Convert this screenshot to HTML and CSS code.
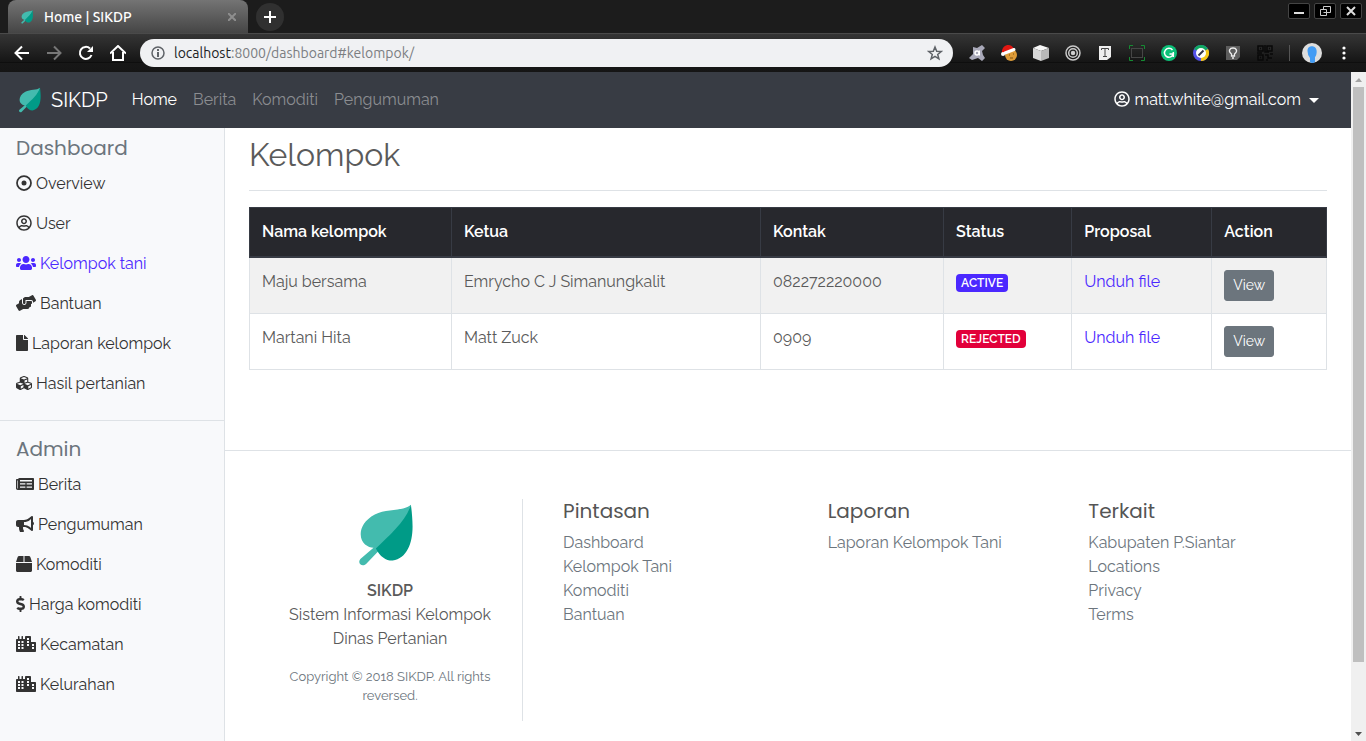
FILE: index.html
```html
<!DOCTYPE html>
<html lang="id">
<head>
<meta charset="utf-8">
<meta name="viewport" content="width=device-width, initial-scale=1">
<title>Home | SIKDP</title>
<link rel="stylesheet" href="styles.css">
</head>
<body>
<svg class="sprite" aria-hidden="true">
  <symbol id="leaf" viewBox="355 190 190 190"><path fill="#43bbae" d="M512 195C490 215 440 206 405 224 375 240 363 262 363 283 363 310 385 323 401 323L362 356C352 368 367 382 379 371L411 338Q510 245 512 195Z"/><path fill="#009b87" d="M512 195C500 240 450 285 408 325 420 350 440 362 458 361 500 355 517 310 517 260 517 235 514 210 512 195Z"/></symbol>
  <symbol id="i-dot" viewBox="0 0 512 512"><circle cx="256" cy="256" r="224" fill="none" stroke="currentColor" stroke-width="56"/><circle cx="256" cy="256" r="80"/></symbol>
  <symbol id="i-user" viewBox="0 0 496 512"><path d="M248 104c-53 0-96 43-96 96s43 96 96 96 96-43 96-96-43-96-96-96zm0 144c-26.500 0-48-21.500-48-48s21.500-48 48-48 48 21.500 48 48-21.500 48-48 48zm0-240C111 8 0 119 0 256s111 248 248 248 248-111 248-248S385 8 248 8zm0 448c-49.700 0-95.100-18.300-130.100-48.400 14.900-23 40.400-38.600 69.600-39.500 20.800 6.400 40.600 9.600 60.500 9.600s39.700-3.100 60.500-9.600c29.200 1 54.700 16.500 69.600 39.500-35 30.100-80.400 48.400-130.100 48.400zm162.700-84.100c-24.400-31.400-62.100-51.900-105.100-51.900-10.200 0-26 9.600-57.600 9.600-31.500 0-47.400-9.600-57.600-9.600-42.900 0-80.600 20.500-105.100 51.900C61.900 339.200 48 299.200 48 256c0-110.300 89.700-200 200-200s200 89.700 200 200c0 43.200-13.900 83.200-37.300 115.900z"/></symbol>
  <symbol id="i-users" viewBox="0 0 640 512"><path d="M96 224c35.300 0 64-28.700 64-64s-28.700-64-64-64-64 28.700-64 64 28.700 64 64 64zm448 0c35.300 0 64-28.700 64-64s-28.700-64-64-64-64 28.700-64 64 28.700 64 64 64zm32 32h-64c-17.600 0-33.500 7.100-45.100 18.600 40.300 22.100 68.900 62 75.100 109.400h66c17.700 0 32-14.300 32-32v-32c0-35.300-28.700-64-64-64zm-256 0c61.900 0 112-50.100 112-112S381.900 32 320 32 208 82.100 208 144s50.100 112 112 112zm76.800 32h-8.300c-20.800 10-43.900 16-68.500 16s-47.600-6-68.500-16h-8.300C179.600 288 128 339.600 128 403.200V432c0 26.500 21.500 48 48 48h288c26.500 0 48-21.500 48-48v-28.800c0-63.600-51.600-115.200-115.200-115.200zm-223.700-13.400C161.500 263.100 145.600 256 128 256H64c-35.300 0-64 28.700-64 64v32c0 17.700 14.300 32 32 32h65.900c6.300-47.400 34.900-87.300 75.200-109.400z"/></symbol>
  <symbol id="i-hands" viewBox="0 0 640 512"><path d="M488 192H336v56c0 39.700-32.300 72-72 72s-72-32.300-72-72V126.400l-64.900 39C107.800 176.900 96 197.800 96 220.200v47.300l-80 46.200C.7 322.500-4.600 342.100 4.300 357.400l80 138.600c8.800 15.300 28.400 20.500 43.700 11.700L231.400 448H368c35.300 0 64-28.700 64-64h16c17.700 0 32-14.300 32-32v-64h8c13.300 0 24-10.700 24-24v-48c0-13.300-10.700-24-24-24zm147.700-37.400L555.700 16C546.900.7 527.300-4.500 512 4.300L408.600 64H306.400c-12 0-23.700 3.400-33.900 9.700L239 94.600c-9.400 5.800-15 16.100-15 27.100V248c0 22.100 17.900 40 40 40s40-17.900 40-40v-88h184c30.900 0 56 25.100 56 56v28.500l80-46.200c15.300-8.900 20.500-28.400 11.700-43.700z"/></symbol>
  <symbol id="i-file" viewBox="0 0 384 512"><path d="M224 136V0H24C10.700 0 0 10.700 0 24v464c0 13.300 10.700 24 24 24h336c13.300 0 24-10.700 24-24V160H248c-13.200 0-24-10.800-24-24zm160-14.100v6.100H256V0h6.100c6.400 0 12.500 2.500 17 7l97.900 98c4.500 4.500 7 10.600 7 16.900z"/></symbol>
  <symbol id="i-cubes" viewBox="0 0 512 512"><path d="M488.600 250.200L392 214V105.500c0-15-9.300-28.400-23.400-33.700l-100-37.500c-8.100-3.100-17.100-3.100-25.300 0l-100 37.500c-14.100 5.300-23.400 18.700-23.400 33.700V214l-96.600 36.200C9.300 255.500 0 268.900 0 283.900V394c0 13.600 7.700 26.100 19.900 32.200l100 50c10.100 5.100 22.100 5.100 32.200 0l103.900-52 103.900 52c10.100 5.100 22.100 5.100 32.200 0l100-50c12.200-6.100 19.900-18.600 19.900-32.200V283.900c0-15-9.300-28.400-23.400-33.700zM358 214.800l-85 31.900v-68.200l85-37v73.300zM154 104.100l102-38.200 102 38.200v.6l-102 41.400-102-41.400v-.6zm84 291.100l-85 42.500v-79.100l85-38.800v75.400zm0-112l-102 41.400-102-41.400v-.6l102-38.200 102 38.200v.6zm240 112l-85 42.500v-79.100l85-38.800v75.400zm0-112l-102 41.400-102-41.400v-.6l102-38.200 102 38.200v.6z"/></symbol>
  <symbol id="i-news" viewBox="0 0 576 512"><path fill-rule="evenodd" d="M552 64H112c-21 0-39 13-45 32H24c-13 0-24 11-24 24v272c0 31 25 56 56 56h496c13 0 24-11 24-24V88c0-13-11-24-24-24zM40 392V144h20v248c0 11-20 11-20 0zM128 128H512V176H128zM128 232H300V272H128zM340 232H512V272H340zM128 332H300V372H128zM340 332H512V372H340z"/></symbol>
  <symbol id="i-horn" viewBox="0 0 576 512"><path d="M576 240c0-23.630-12.950-44.040-32-55.120V32.010C544 23.260 537.020 0 512 0c-7.120 0-14.190 2.380-19.980 7.020l-85.030 68.030C364.280 109.190 310.660 128 256 128H64c-35.350 0-64 28.650-64 64v96c0 35.350 28.650 64 64 64h33.700c-1.390 10.480-2.180 21.140-2.180 32 0 39.770 9.260 77.350 25.560 110.940 5.190 10.690 16.520 17.060 28.400 17.060h74.280c26.050 0 41.690-29.840 25.900-50.560-16.400-21.520-26.150-48.360-26.150-77.440 0-11.110 1.620-21.790 4.410-32H256c54.660 0 108.280 18.810 150.980 52.950l85.030 68.030a32.023 32.023 0 0 0 19.980 7.020c24.920 0 32-22.780 32-32V295.130C563.050 284.040 576 263.630 576 240zm-96 141.420l-33.050-26.440C392.950 311.780 325.120 288 256 288v-96c69.120 0 136.950-23.780 190.950-66.980L480 98.580v282.840z"/></symbol>
  <symbol id="i-box" viewBox="0 0 512 512"><path d="M509.500 184.600L458.900 32.800C452.400 13.200 434.100 0 413.400 0H272v192h238.700c-.4-2.500-.4-5-1.200-7.400zM240 0H98.600c-20.700 0-39 13.200-45.500 32.800L2.500 184.600c-.8 2.400-.8 4.900-1.200 7.400H240V0zM0 224v240c0 26.500 21.500 48 48 48h416c26.500 0 48-21.500 48-48V224H0z"/></symbol>
  <symbol id="i-dollar" viewBox="0 0 288 512"><path d="M209.200 233.400l-108-31.600C88.700 198.200 80 186.500 80 173.500c0-16.300 13.200-29.500 29.500-29.500h66.300c12.200 0 24.200 3.700 34.200 10.500 6.100 4.100 14.300 3.100 19.500-2l34.800-34c7.100-6.900 6.100-18.400-1.800-24.500C238 74.800 207.400 64.100 176 64V16c0-8.800-7.200-16-16-16h-32c-8.800 0-16 7.200-16 16v48h-2.500C45.800 64-5.400 118.700.5 183.600c4.200 46.100 39.400 83.600 83.800 96.600l102.500 30c12.500 3.700 21.200 15.300 21.200 28.300 0 16.300-13.200 29.500-29.500 29.500h-66.300C100 368 88 364.300 78 357.500c-6.100-4.100-14.300-3.100-19.500 2l-34.800 34c-7.100 6.900-6.100 18.400 1.800 24.500 24.500 19.200 55.100 29.900 86.500 30v48c0 8.800 7.200 16 16 16h32c8.800 0 16-7.200 16-16v-48.200c46.600-.9 90.300-28.600 105.700-72.700 21.500-61.600-14.600-124.800-72.500-141.700z"/></symbol>
  <symbol id="i-city" viewBox="0 0 640 512"><path fill-rule="evenodd" d="M616 192H480V24c0-13-11-24-24-24H312c-13 0-24 11-24 24v72h-64V16c0-9-7-16-16-16h-16c-9 0-16 7-16 16v80h-64V16c0-9-7-16-16-16H80c-9 0-16 7-16 16v80H24c-13 0-24 11-24 24v360c0 18 14 32 32 32h576c18 0 32-14 32-32V216c0-13-11-24-24-24zM64 160h64v64H64zm0 96h64v64H64zm0 96h64v64H64zM176 160h64v64h-64zm0 96h64v64h-64zm0 96h64v64h-64zM352 64h64v64h-64zm0 96h64v64h-64zm0 96h64v64h-64zM512 256h64v64h-64zm0 96h64v64h-64z"/></symbol>
</svg>

<div class="window">
  <header class="chrome">
    <div class="tabstrip">
      <div class="tab">
        <svg class="favicon"><use href="#leaf"/></svg>
        <span class="tab-title">Home | SIKDP</span>
        <button class="tab-close" aria-label="Close tab"><svg viewBox="0 0 8 8"><path d="M0 0 8 8M8 0 0 8" stroke="#8e8e8e" stroke-width="2"/></svg></button>
      </div>
      <button class="new-tab" aria-label="New tab"><svg viewBox="0 0 12 12"><path d="M6 0V12M0 6H12" stroke="#fff" stroke-width="2"/></svg></button>
      <div class="window-buttons">
        <button aria-label="Minimize"><svg viewBox="0 0 12 12"><path d="M1 8H11" stroke="#ddd" stroke-width="2"/></svg></button>
        <button aria-label="Restore"><svg viewBox="0 0 12 12" fill="none" stroke="#ccc"><path d="M4.500 1.500H11.500V7.500H7.500M4.500 1.500V4M1.500 4.500H7.500V10.500H1.500ZM4.500 7.500H7"/></svg></button>
        <button aria-label="Close"><svg viewBox="0 0 12 12"><path d="M2 2 10 10M10 2 2 10" stroke="#ddd" stroke-width="2"/></svg></button>
      </div>
    </div>
    <div class="toolbar">
      <nav class="history">
        <button aria-label="Back"><svg viewBox="0 0 16 16" fill="none" stroke="#fff" stroke-width="2"><path d="M15 8H2M8 1.500 1.500 8 8 14.500"/></svg></button>
        <button aria-label="Forward"><svg viewBox="0 0 16 16" fill="none" stroke="#777" stroke-width="2"><path d="M1 8H14M8 1.500 14.500 8 8 14.500"/></svg></button>
        <button aria-label="Reload"><svg viewBox="0 0 16 16"><path d="M13.500 10A6 6 0 1 1 12 3.500" fill="none" stroke="#fff" stroke-width="2"/><path d="M15 1V7H9Z" fill="#fff"/></svg></button>
        <button aria-label="Home page"><svg viewBox="0 0 16 16" fill="none" stroke="#fff" stroke-width="2"><path d="M0 8.500 8 1 16 8.500M3 7V15H13V7"/></svg></button>
      </nav>
      <div class="address">
        <svg viewBox="0 0 16 16"><circle cx="8" cy="8" r="6" fill="none" stroke="#5f6368" stroke-width="1.500"/><path d="M8 4V6M8 7V12" stroke="#5f6368" stroke-width="2"/></svg>
        <span class="url"><b>localhost</b>:8000/dashboard#kelompok/</span>
        <button aria-label="Bookmark"><svg viewBox="0 0 16 16"><path d="M8 2 9.700 6.200 14.200 6.500 10.700 9.400 11.900 13.800 8 11.300 4.100 13.800 5.300 9.400 1.800 6.500 6.300 6.200Z" fill="none" stroke="#5f6368" stroke-width="1.500"/></svg></button>
      </div>
      <div class="extensions">
        <svg viewBox="0 0 16 16"><path d="M4 2 8 3 13 0 16 3 13 6 14 10 16 13 13 16 9 13 3 15 0 13 4 9Z" fill="#a9a9b9"/><circle cx="8" cy="8" r="2" fill="none" stroke="#fff" stroke-width="1.500"/><path d="M10.500 5.500V10.500" stroke="#fff"/></svg>
        <svg viewBox="0 0 16 16"><circle cx="10" cy="10" r="6" fill="#dc9b38"/><path d="M1 8C0 0 10-3 13 4Z" fill="#e21712"/><path d="M4 8 13 4.500" stroke="#fff" stroke-width="3" stroke-linecap="round"/><circle cx="2" cy="9" r="2" fill="#fff"/><path d="M8 10H9M12 9H13M9 13H12" stroke="#805010"/></svg>
        <svg viewBox="0 0 16 16"><path d="M0 3 7 0 16 3 8 6Z" fill="#f6f6f6"/><path d="M0 3 8 6V16L0 13Z" fill="#d8d8d8"/><path d="M8 6 16 3V13L8 16Z" fill="#b9b9b9"/></svg>
        <svg viewBox="0 0 16 16" fill="none" stroke="#c9c9c9" stroke-width="1.500"><circle cx="8" cy="8" r="7"/><circle cx="8" cy="8" r="4.300"/><circle cx="8" cy="8" r="1.500" fill="#ddd"/></svg>
        <svg viewBox="0 0 16 16"><path d="M2 1H14V12L10 15H2Z" fill="#eee"/><path d="M4.500 5V3.500H11.500V5M8 3V11.500M6 11.500H10" fill="none" stroke="#444"/></svg>
        <svg viewBox="0 0 16 16" fill="none"><path d="M.5 4V.5H4M12 .5H15.500V4M15.500 12V15.500H12M4 15.500H.5V12" stroke="#158a32"/><rect x="2.500" y="3.500" width="11" height="9" stroke="#464646"/></svg>
        <svg viewBox="0 0 16 16"><circle cx="8" cy="8" r="8" fill="#0cc078"/><path d="M11.500 5A4.500 4.500 0 1 0 12.300 9H8.500M12.300 7V12" fill="none" stroke="#fff" stroke-width="1.500"/></svg>
        <svg viewBox="0 0 16 16"><circle cx="8" cy="8" r="8" fill="#5552ea"/><path d="M8 8 1 4A8 8 0 0 1 15 4Z" fill="#11a861"/><path d="M8 8 15 4A8 8 0 0 1 8 16Z" fill="#f5c614"/><circle cx="8" cy="8" r="5" fill="#fff"/><path d="M5.500 10.500 10.500 5.500" stroke="#334" stroke-width="2"/></svg>
        <svg viewBox="0 0 16 16"><path d="M1 1H15V12L12 15H1Z" fill="#5d5d5d"/><path d="M6.500 9C2.500 6 5 3 8 3S13.500 6 9.500 9V11H6.500ZM7 13H9" fill="none" stroke="#eee" stroke-width="1.300"/></svg>
        <svg viewBox="0 0 16 16" fill="none" stroke="#090909" stroke-width="1.500"><path d="M1 1H6V6H1ZM10 1H15V6H10ZM1 10H6V15H1ZM8 0V7H12M8 10H11V13H15M10 16V14M13 9H16M0 8H5M3 3.500H4M12 3.500H13M3 12.500H4"/></svg>
      </div>
      <span class="divider"></span>
      <svg class="avatar" viewBox="0 0 20 20"><circle cx="10" cy="10" r="10" fill="#dedede"/><path d="M5.500 8C5.500 3.500 9 3 11.500 3.500 16 4.500 15 12 13 14V19Q10 21 8 19V15Q5.500 12 5.500 8Z" fill="#439cf4"/></svg>
      <button class="menu" aria-label="Menu"><svg viewBox="0 0 4 14" fill="#fff"><circle cx="2" cy="2" r="1.600"/><circle cx="2" cy="7" r="1.600"/><circle cx="2" cy="12" r="1.600"/></svg></button>
    </div>
  </header>

  <div class="viewport">
    <div class="page">
      <nav class="navbar">
        <a class="brand" href="#"><svg><use href="#leaf"/></svg>SIKDP</a>
        <a class="active" href="#">Home</a>
        <a href="#">Berita</a>
        <a href="#">Komoditi</a>
        <a href="#">Pengumuman</a>
        <button class="account"><svg class="fa"><use href="#i-user"/></svg>matt.white@gmail.com<span class="caret"></span></button>
      </nav>
      <div class="layout">
        <aside class="sidebar">
          <section>
            <h5>Dashboard</h5>
            <a href="#"><svg class="fa"><use href="#i-dot"/></svg>Overview</a>
            <a href="#"><svg class="fa"><use href="#i-user"/></svg>User</a>
            <a class="current" href="#"><svg class="fa fa-wide"><use href="#i-users"/></svg>Kelompok tani</a>
            <a href="#"><svg class="fa fa-wide"><use href="#i-hands"/></svg>Bantuan</a>
            <a href="#"><svg class="fa fa-file"><use href="#i-file"/></svg>Laporan kelompok</a>
            <a href="#"><svg class="fa"><use href="#i-cubes"/></svg>Hasil pertanian</a>
          </section>
          <section>
            <h5>Admin</h5>
            <a href="#"><svg class="fa fa-mid"><use href="#i-news"/></svg>Berita</a>
            <a href="#"><svg class="fa fa-mid"><use href="#i-horn"/></svg>Pengumuman</a>
            <a href="#"><svg class="fa"><use href="#i-box"/></svg>Komoditi</a>
            <a href="#"><svg class="fa fa-slim"><use href="#i-dollar"/></svg>Harga komoditi</a>
            <a href="#"><svg class="fa fa-wide"><use href="#i-city"/></svg>Kecamatan</a>
            <a href="#"><svg class="fa fa-wide"><use href="#i-city"/></svg>Kelurahan</a>
          </section>
        </aside>
        <div class="content">
          <main>
            <h2>Kelompok</h2>
            <table>
              <colgroup><col class="c-name"><col class="c-lead"><col class="c-contact"><col class="c-status"><col class="c-file"><col></colgroup>
              <thead><tr><th>Nama kelompok</th><th>Ketua</th><th>Kontak</th><th>Status</th><th>Proposal</th><th>Action</th></tr></thead>
              <tbody>
                <tr><td>Maju bersama</td><td>Emrycho C J Simanungkalit</td><td>082272220000</td><td><span class="badge">ACTIVE</span></td><td><a href="#">Unduh file</a></td><td><button class="btn">View</button></td></tr>
                <tr><td>Martani Hita</td><td>Matt Zuck</td><td>0909</td><td><span class="badge rejected">REJECTED</span></td><td><a href="#">Unduh file</a></td><td><button class="btn">View</button></td></tr>
              </tbody>
            </table>
          </main>
          <footer>
            <div class="about">
              <svg><use href="#leaf"/></svg>
              <strong>SIKDP</strong>
              <p>Sistem Informasi Kelompok<br>Dinas Pertanian</p>
              <small>Copyright © 2018 SIKDP. All rights reversed.</small>
            </div>
            <div class="links"><h5>Pintasan</h5><a href="#">Dashboard</a><a href="#">Kelompok Tani</a><a href="#">Komoditi</a><a href="#">Bantuan</a></div>
            <div class="links"><h5>Laporan</h5><a href="#">Laporan Kelompok Tani</a></div>
            <div class="links"><h5>Terkait</h5><a href="#">Kabupaten P.Siantar</a><a href="#">Locations</a><a href="#">Privacy</a><a href="#">Terms</a></div>
          </footer>
        </div>
      </div>
    </div>
    <div class="scrollbar" aria-hidden="true">
      <svg viewBox="0 0 15 15"><path d="M4 10 8 6 11 10Z" fill="#a3a3a3"/></svg>
      <div class="track"><div class="thumb"></div></div>
      <svg viewBox="0 0 15 15"><path d="M4 6H11L7.500 10Z" fill="#505050"/></svg>
    </div>
  </div>
</div>
</body>
</html>
```
FILE: styles.css
```css
* { box-sizing: border-box; }
body {
  margin: 0;
  font: 400 16px/24px Raleway, "Open Sans", sans-serif;
  color: #5a5a5a;
  background: #fff;
}
a { color: inherit; text-decoration: none; }
button { padding: 0; border: 0; background: none; font: inherit; color: inherit; }
h2, h5, p { margin: 0; }
svg { display: block; flex: none; }
.sprite { display: none; }

.window { display: flex; flex-direction: column; height: 100vh; overflow: hidden; }

/* Browser frame */
.chrome { background: #1c1c1c; font: 400 14px/20px Ubuntu, "Noto Sans", sans-serif; }
.tabstrip { display: flex; height: 33px; padding-left: 8px; }
.tab {
  display: flex; align-items: center; width: 240px; padding: 0 12px;
  border-radius: 8px 8px 0 0;
  background: linear-gradient(#747474, #454545);
  color: #fff;
}
.favicon { width: 16px; height: 14px; }
.tab-title { flex: 1; margin-left: 8px; font-size: 14px; font-weight: 500; }
.tab-close svg { width: 8px; height: 8px; }
.new-tab {
  display: grid; place-items: center; width: 28px; height: 28px;
  margin: 3px 0 0 8px; border-radius: 50%; background: #303030;
}
.new-tab svg { width: 12px; height: 12px; }
.window-buttons { display: flex; gap: 4px; margin: 3px 4px 0 auto; }
.window-buttons button {
  display: grid; place-items: center; width: 22px; height: 16px;
  border: 1px solid #444; border-radius: 2px; background: #000;
}
.window-buttons svg { width: 12px; height: 12px; }
.toolbar {
  display: flex; align-items: center; height: 39px; padding: 0 20px 0 14px;
  border-top: 1px solid #4a4a4a;
  background: linear-gradient(#353535, #151515 28px, #050505 28px, #171717 29px, #151515);
}
.history { display: flex; gap: 16px; margin-right: 14px; }
.history svg, .address svg, .extensions svg { width: 16px; height: 16px; }
.address {
  display: flex; flex: 1; align-items: center; height: 28px; padding: 0 10px;
  border-radius: 14px; background: #f0f1f3;
}
.url { flex: 1; margin-left: 8px; color: #7b7e82; }
.url b { font-weight: 400; color: #202124; }
.extensions { display: flex; gap: 16px; margin: 0 16px; }
.divider { width: 1px; height: 16px; background: #555; }
.avatar { width: 20px; height: 20px; margin: 0 20px 0 12px; }
.menu svg { width: 4px; height: 14px; }

.viewport { display: flex; flex: 1; min-height: 0; }
.scrollbar { display: flex; flex-direction: column; width: 15px; background: #f0f0f0; }
.scrollbar > svg { width: 15px; height: 15px; }
.track { flex: 1; padding: 0 2px; }
.thumb { width: 11px; height: 90%; background: #bfbfbf; }

/* Page */
.page { display: flex; flex: 1; flex-direction: column; min-width: 0; overflow: hidden; }
.navbar {
  display: flex; align-items: center; gap: 16px; height: 56px; padding: 0 32px 0 16px;
  background: #383c44; color: #8b8d91;
}
.brand { display: flex; align-items: center; gap: 4px; margin-right: 8px; font-size: 20px; }
.brand svg { width: 31px; height: 26px; }
.navbar .brand, .navbar .active, .account { color: #fff; }
.account { display: flex; align-items: center; gap: 4px; margin-left: auto; }
.caret { margin-left: 4px; border: 5px solid transparent; border-top-color: #fff; border-bottom: 0; }

.fa { width: 16px; height: 16px; margin-bottom: 2px; fill: currentColor; }
.fa-wide { width: 20px; }
.fa-mid { width: 18px; }
.fa-file { width: 12px; }
.fa-slim { width: 9px; }

.layout { display: flex; flex: 1; min-height: 0; }
.sidebar {
  width: 225px; border-right: 1px solid #dee2e6;
  background: #f8f9fb; color: #333;
}
.sidebar section { padding: 8px 0 16px 16px; }
.sidebar section + section { padding-top: 16px; border-top: 1px solid #dee2e6; }
h5 { font: 400 20px/24px Poppins, Inter, sans-serif; }
.sidebar h5 { color: #6c757d; }
.sidebar a { display: flex; align-items: center; gap: 4px; height: 40px; }
.sidebar h5 + a { margin-top: 4px; }
.sidebar .current { color: #4b28ff; }

.content { flex: 1; min-width: 0; }
main { padding: 8px 24px 80px; }
h2 {
  margin-bottom: 16px; padding-bottom: 16px; border-bottom: 1px solid #dee2e6;
  font-size: 32px; font-weight: 400; line-height: 38px;
}
table { width: 100%; table-layout: fixed; border-collapse: collapse; }
.c-name { width: 18.75%; }
.c-lead { width: 28.7%; }
.c-contact { width: 17%; }
.c-status { width: 11.9%; }
.c-file { width: 13%; }
th, td { padding: 12px; border: 1px solid #dee2e6; text-align: left; vertical-align: top; }
th { border-color: #373b44; border-bottom-width: 2px; background: #27282d; color: #fff; font-weight: 600; }
tbody tr:first-child { background: #f1f1f1; }
td a { color: #4b28ff; }
.badge {
  display: inline-block; padding: 3px 5px; border-radius: 4px;
  background: #4b28ff; color: #fff; font-size: 12px; font-weight: 600; line-height: 12px;
}
.rejected { background: #e2003a; }
.btn {
  display: block; padding: 4px 8px; border: 1px solid #6c757d; border-radius: 3px;
  background: #6c757d; color: #fff; font-size: 14px; line-height: 21px;
}

footer {
  display: grid; grid-template-columns: 265fr 265fr 261fr 271fr;
  padding: 48px 32px; border-top: 1px solid #dee2e6;
}
.about {
  display: flex; flex-direction: column; align-items: center;
  padding: 4px 31px 16px 32px; border-right: 1px solid #dee2e6; text-align: center;
}
.about svg { width: 64px; height: 64px; margin-bottom: 12px; }
.about strong { font-weight: 600; }
.about p { margin-bottom: 16px; white-space: nowrap; }
.about small { color: #6c757d; font-size: 13px; line-height: 19px; }
.links { display: flex; flex-direction: column; padding-left: 40px; color: #6c757d; white-space: nowrap; }
.links h5 { margin-bottom: 8px; color: #555; }
```
